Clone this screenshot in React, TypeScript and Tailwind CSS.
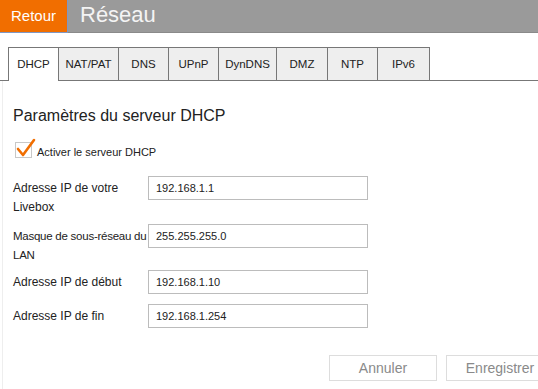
import React, { useState } from 'react';

const TABS = [
  { label: 'DHCP', w: 'w-[51px]' },
  { label: 'NAT/PAT', w: 'w-[60px]' },
  { label: 'DNS', w: 'w-[50px]' },
  { label: 'UPnP', w: 'w-[50px]' },
  { label: 'DynDNS', w: 'w-[58px]' },
  { label: 'DMZ', w: 'w-[51px]' },
  { label: 'NTP', w: 'w-[50px]' },
  { label: 'IPv6', w: 'w-[52px]' },
];

const FIELDS = [
  { lines: ['Adresse IP de votre', 'Livebox'], value: '192.168.1.1', h: 'h-[48px]', tight: 'text-[12px]' },
  { lines: ['Masque de sous-réseau du', 'LAN'], value: '255.255.255.0', h: 'h-[46px]', tight: 'text-[11.5px] tracking-[-0.25px]' },
  { lines: ['Adresse IP de début'], value: '192.168.1.10', h: 'h-[34px]', tight: 'text-[12px]' },
  { lines: ['Adresse IP de fin'], value: '192.168.1.254', h: 'h-[51px]', tight: 'text-[12px]' },
];

export default function App() {
  const [active, setActive] = useState('DHCP');
  const [enabled, setEnabled] = useState(true);
  const [values, setValues] = useState(FIELDS.map(f => f.value));

  return (
    <div className="w-[538px] h-[389px] overflow-hidden bg-white font-['Liberation_Sans',Arial,sans-serif] text-[#222]">
      {/* header */}
      <div className="flex h-[33px] bg-[#9a9a9a] border-b border-[#8a8a8a]">
        <button className="w-[68px] h-[33px] bg-[#f16e00] text-white text-[15px] border-r border-b border-[#7f97c4] pt-[1px]">
          Retour
        </button>
        <h1 className="ml-[12px] pt-[1px] text-[22px] leading-[28px] text-[#f4f4f4]">Réseau</h1>
      </div>

      {/* tabs */}
      <div className="flex mt-[14px] h-[34px]">
        <div className="w-[8px] border-b border-[#777]" />
        {TABS.map(t => (
          <button
            key={t.label}
            onClick={() => setActive(t.label)}
            className={`${t.w} h-[34px] text-[11.5px] pt-[1px] border-t border-r border-[#777] ${
              t.label === 'DHCP' ? 'border-l' : ''
            } ${active === t.label ? 'bg-white border-b-0' : 'bg-[#eeeeee] border-b'}`}
          >
            {t.label}
          </button>
        ))}
        <div className="flex-1 border-b border-[#777]" />
      </div>

      {/* content */}
      <div className="ml-[2px] border-l border-[#eeeeee] pl-[10px] pt-[25px] h-[308px]">
        <h2 className="text-[16px] leading-[20px] text-[#222]">Paramètres du serveur DHCP</h2>

        <label className="flex items-end mt-[16px] ml-[2px] cursor-pointer" onClick={() => setEnabled(!enabled)}>
          <span className="relative w-[17px] h-[16px] border border-[#c8c8c8] bg-white">
            {enabled && (
              <svg className="absolute -left-[1px] -top-[6px]" width="22" height="22" viewBox="0 0 22 22">
                <path d="M3 12 L8 18 L19 3" fill="none" stroke="#f16e00" strokeWidth="2.6" strokeLinecap="round" strokeLinejoin="round" />
              </svg>
            )}
          </span>
          <span className="ml-[5px] text-[11px] leading-[14px] -mb-[1px]">Activer le serveur DHCP</span>
        </label>

        <div className="mt-[18px]">
          {FIELDS.map((f, i) => (
            <div key={f.lines[0]} className={`flex items-start ${f.h}`}>
              <div className={`w-[135px] leading-[19px] pt-[3px] whitespace-nowrap ${f.tight}`}>
                {f.lines.map(l => (
                  <div key={l}>{l}</div>
                ))}
              </div>
              <input
                value={values[i]}
                onChange={e => setValues(values.map((v, j) => (j === i ? e.target.value : v)))}
                className="w-[220px] h-[24px] border border-[#bcbcbc] px-[7px] text-[11px] text-[#222] outline-none"
              />
            </div>
          ))}
        </div>

        <div className="flex gap-[9px] ml-[316px] w-[260px]">
          <button className="shrink-0 w-[108px] h-[26px] border border-[#dddddd] text-[14px] text-[#8a8a8a]">Annuler</button>
          <button className="shrink-0 w-[108px] h-[26px] border border-[#dddddd] text-[14px] text-[#8a8a8a]">Enregistrer</button>
        </div>
      </div>
    </div>
  );
}
